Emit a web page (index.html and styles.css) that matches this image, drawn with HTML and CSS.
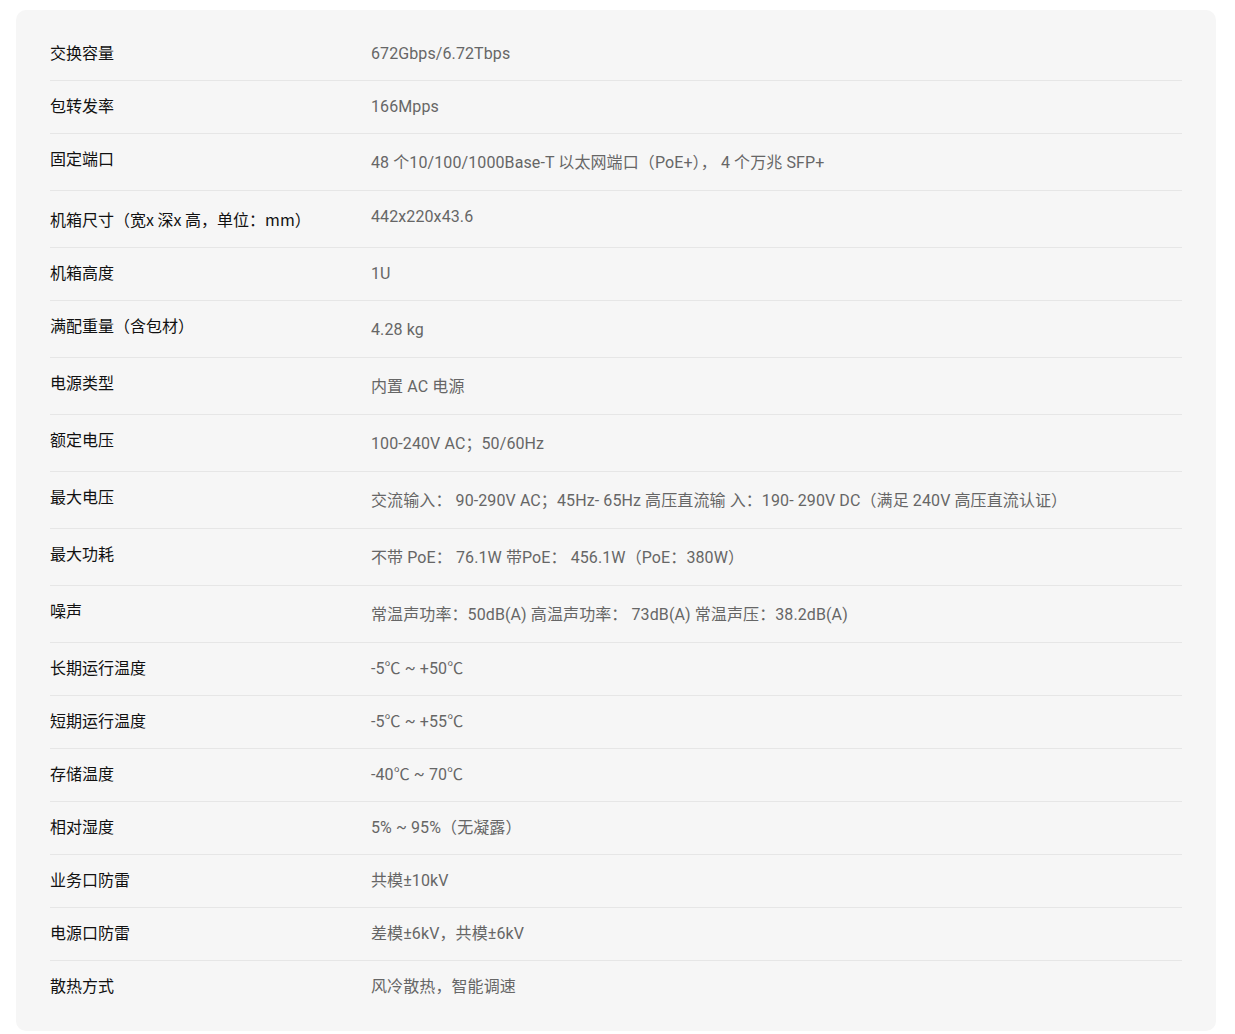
FILE: index.html
```html
<!DOCTYPE html>
<html lang="zh-CN">
<head>
<meta charset="utf-8">
<title>规格参数</title>
<link rel="stylesheet" href="styles.css">
</head>
<body>
<div class="card">
  <div class="row"><div class="label">交换容量</div><div class="value">672Gbps/6.72Tbps</div></div>
  <div class="row"><div class="label">包转发率</div><div class="value">166Mpps</div></div>
  <div class="row"><div class="label">固定端口</div><div class="value extra">48 个10/100/1000Base-T 以太网端口（PoE+）， 4 个万兆 SFP+</div></div>
  <div class="row"><div class="label extra">机箱尺寸（宽x 深x 高，单位：mm）</div><div class="value">442x220x43.6</div></div>
  <div class="row"><div class="label">机箱高度</div><div class="value">1U</div></div>
  <div class="row"><div class="label">满配重量（含包材）</div><div class="value extra">4.28 kg</div></div>
  <div class="row"><div class="label">电源类型</div><div class="value extra">内置 AC 电源</div></div>
  <div class="row"><div class="label">额定电压</div><div class="value extra">100-240V AC；50/60Hz</div></div>
  <div class="row"><div class="label">最大电压</div><div class="value extra">交流输入： 90-290V AC；45Hz- 65Hz 高压直流输 入：190- 290V DC（满足 240V 高压直流认证）</div></div>
  <div class="row"><div class="label">最大功耗</div><div class="value extra">不带 PoE： 76.1W 带PoE： 456.1W（PoE：380W）</div></div>
  <div class="row"><div class="label">噪声</div><div class="value extra">常温声功率：50dB(A) 高温声功率： 73dB(A) 常温声压：38.2dB(A)</div></div>
  <div class="row"><div class="label">长期运行温度</div><div class="value">-5℃ ~ +50℃</div></div>
  <div class="row"><div class="label">短期运行温度</div><div class="value">-5℃ ~ +55℃</div></div>
  <div class="row"><div class="label">存储温度</div><div class="value">-40℃ ~ 70℃</div></div>
  <div class="row"><div class="label">相对湿度</div><div class="value">5% ~ 95%（无凝露）</div></div>
  <div class="row"><div class="label">业务口防雷</div><div class="value">共模±10kV</div></div>
  <div class="row"><div class="label">电源口防雷</div><div class="value">差模±6kV，共模±6kV</div></div>
  <div class="row"><div class="label">散热方式</div><div class="value">风冷散热，智能调速</div></div>
</div>
</body>
</html>
```
FILE: styles.css
```css
html, body {
  margin: 0;
  padding: 0;
  background: #ffffff;
}
body {
  padding: 10px 0 0 16px;
  font-family: "Noto Sans CJK SC", sans-serif;
}
.card {
  width: 1200px;
  box-sizing: border-box;
  background: #f6f6f6;
  border-radius: 10px;
  padding: 18px 34px 17px 34px;
}
.row {
  display: flex;
  align-items: flex-start;
  padding: 15px 0 16px;
  border-bottom: 1px solid #e6e6e6;
}
.row:last-child {
  border-bottom-color: transparent;
}
.label {
  width: 321px;
  flex: none;
  font-size: 16px;
  line-height: 19px;
  padding-bottom: 2px;
  color: #111111;
  font-family: "Noto Sans CJK SC", sans-serif;
}
.value {
  flex: 1;
  font-size: 16px;
  line-height: 21px;
  color: #666666;
  font-family: Roboto, "Noto Sans CJK SC", sans-serif;
  letter-spacing: 0.1px;
}
.extra {
  padding-top: 3px;
  padding-bottom: 1px;
}
.label.extra {
  padding-top: 4px;
  padding-bottom: 2px;
}
```
